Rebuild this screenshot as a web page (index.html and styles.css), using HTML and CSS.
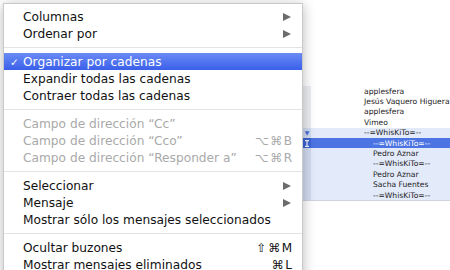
FILE: index.html
```html
<!DOCTYPE html>
<html lang="es">
  <head>
    <meta charset="UTF-8" />
    <title>Menú Visualización</title>
    <link rel="stylesheet" href="styles.css">
  </head>
  <body>
    <div class="menu">
      <div class="item">Columnas<span class="arrow"></span></div>
      <div class="item">Ordenar por<span class="arrow"></span></div>
      <div class="sep"></div>
      <div class="item active"><span class="check">✓</span>Organizar por cadenas</div>
      <div class="item">Expandir todas las cadenas</div>
      <div class="item">Contraer todas las cadenas</div>
      <div class="sep"></div>
      <div class="item off">Campo de dirección “Cc”</div>
      <div class="item off">Campo de dirección “Cco”<span class="key">⌥⌘B</span></div>
      <div class="item off">Campo de dirección “Responder a”<span class="key">⌥⌘R</span></div>
      <div class="sep"></div>
      <div class="item">Seleccionar<span class="arrow"></span></div>
      <div class="item">Mensaje<span class="arrow"></span></div>
      <div class="item">Mostrar sólo los mensajes seleccionados</div>
      <div class="sep"></div>
      <div class="item">Ocultar buzones<span class="key">⇧⌘M</span></div>
      <div class="item">Mostrar mensajes eliminados<span class="key">⌘L</span></div>
    </div>

    <div class="mailbox">
      <div class="row"><span class="gutter"></span><span class="from">applesfera</span></div>
      <div class="row"><span class="gutter"></span><span class="from">Jesús Vaquero Higuera</span></div>
      <div class="row"><span class="gutter"></span><span class="from">applesfera</span></div>
      <div class="row"><span class="gutter"></span><span class="from">Vimeo</span></div>
      <div class="thread">
        <div class="row"><span class="gutter"><span class="tri">▼</span></span><span class="from">--=WhisKiTo=--</span></div>
        <div class="row sel"><span class="gutter"><svg width="4" height="7" viewBox="0 0 4 7"><path d="M0 0h4v1.3H2.6v4.4H4V7H0V5.7h1.4V1.3H0z" fill="#f2f5ff"/></svg></span><span class="from child">--=WhisKiTo=--</span></div>
        <div class="row"><span class="gutter"></span><span class="from child">Pedro Aznar</span></div>
        <div class="row"><span class="gutter"></span><span class="from child">--=WhisKiTo=--</span></div>
        <div class="row"><span class="gutter"></span><span class="from child">Pedro Aznar</span></div>
        <div class="row"><span class="gutter"></span><span class="from child">Sacha Fuentes</span></div>
        <div class="row"><span class="gutter"></span><span class="from child">--=WhisKiTo=--</span></div>
      </div>
    </div>
  </body>
</html>
```

FILE: styles.css
```css
body {
  margin: 0;
  width: 450px;
  height: 270px;
  overflow: hidden;
  display: flex;
  align-items: flex-start;
  background-color: #fff;
  font-family: "DejaVu Sans", "Liberation Sans", sans-serif;
}

/* menú desplegable */
.menu {
  position: relative;
  z-index: 1;
  flex: 0 0 298px;
  margin: 3px 0 0 3px;
  padding-top: 4px;
  height: 300px;
  background-color: #fff;
  border: 1px solid #c9c9c9;
  box-shadow: 0 2px 12px rgba(0, 0, 0, 0.28);
}

.item {
  height: 17px;
  display: flex;
  align-items: center;
  justify-content: space-between;
  padding: 0 10px 0 19px;
  font-size: 12.2px;
  color: #111;
  position: relative;
}

.item.active {
  color: #fff;
  background: linear-gradient(#6a8bf4, #3a60ea);
  justify-content: flex-start;
}

.item.off {
  color: #a9a9a9;
}

.check {
  position: absolute;
  left: 6px;
  font-size: 10.5px;
}

.arrow {
  width: 0;
  height: 0;
  border-top: 4.5px solid transparent;
  border-bottom: 4.5px solid transparent;
  border-left: 8px solid #6b6b6b;
  margin-right: 1px;
}

.key {
  font-size: 12px;
  letter-spacing: 1.5px;
  margin-right: -1.5px;
}

.sep {
  height: 1px;
  margin: 5px 0;
  background-color: #e3e3e3;
}

/* lista de mensajes detrás */
.mailbox {
  flex: 1;
  padding-top: 86px;
  font-size: 7.6px;
  color: #222;
}

.row {
  height: 10.4px;
  display: flex;
  align-items: center;
}

.gutter {
  width: 8px;
  height: 100%;
  display: flex;
  align-items: center;
  justify-content: center;
  background-color: #eceef2;
}

.from {
  padding-left: 53px;
  white-space: nowrap;
}

.from.child {
  padding-left: 62px;
}

.thread {
  background-color: #e3eafa;
  border-bottom: 1px solid #cfd4dc;
}

.thread .gutter {
  background-color: #d2dcf0;
}

.tri {
  font-size: 6px;
  color: #4a6fd8;
}

.row.sel {
  background-color: #4c74e2;
  color: #fff;
}

.row.sel .gutter {
  background-color: #3d63d6;
}
```
